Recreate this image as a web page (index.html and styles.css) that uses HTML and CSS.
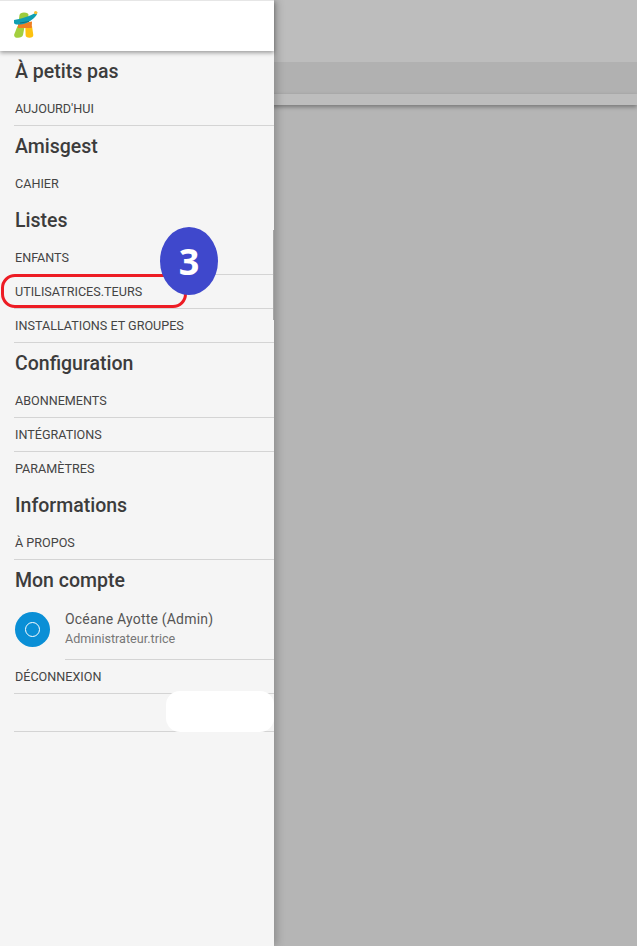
FILE: index.html
```html
<!DOCTYPE html>
<html lang="fr">
<head>
<meta charset="utf-8">
<title>Amisgest</title>
<link rel="stylesheet" href="styles.css">
</head>
<body>
<div class="app">
  <main class="backdrop">
    <div class="bar-top"></div>
    <div class="bar-band"></div>
    <div class="bar-low"></div>
  </main>
  <aside class="drawer">
    <header class="drawer-head">
      <svg class="logo" width="26" height="29" viewBox="13 10 26 29">
        <path d="M18.5 23 L19.5 15 Q20 12.5 24 12.5 Q28.5 12.5 28.5 15 L27.5 22Z" fill="#9ccb3b"/>
        <path d="M17.5 26 L24.7 26 L23 35 Q22 37.7 18 37.7 Q13.7 37.7 14.2 34.5Z" fill="#a3cf3e"/>
        <path d="M25.3 26 L32 26 L33.3 35 Q33.3 37.7 29.5 37.7 Q25.6 37.7 25.6 35Z" fill="#fdc20f"/>
        <path d="M18 24 L32 21.5 L31.7 28 L18 28Z" fill="#ee7f22"/>
        <path d="M14 20 C20 19 30 16.5 37 12 C37.5 13 37 15 35 17 C31 21 26 24 20 24.5 C17 24.7 14.5 24.5 14 23Z" fill="#0f9fb2"/>
        <path d="M20 23 L29 21.5" stroke="#0b6f80" stroke-width="1"/>
        <circle cx="35.7" cy="12.6" r="1.7" fill="#fbc02d"/>
      </svg>
    </header>
    <nav class="menu">
      <h2 class="section first">À petits pas</h2>
      <a class="item">AUJOURD'HUI</a>
      <h2 class="section">Amisgest</h2>
      <a class="item plain">CAHIER</a>
      <h2 class="section">Listes</h2>
      <a class="item">ENFANTS</a>
      <a class="item">UTILISATRICES.TEURS</a>
      <a class="item">INSTALLATIONS ET GROUPES</a>
      <h2 class="section">Configuration</h2>
      <a class="item">ABONNEMENTS</a>
      <a class="item">INTÉGRATIONS</a>
      <a class="item plain">PARAMÈTRES</a>
      <h2 class="section">Informations</h2>
      <a class="item">À PROPOS</a>
      <h2 class="section">Mon compte</h2>
      <div class="profile">
        <div class="avatar"><span class="avatar-ring"></span></div>
        <div class="who">
          <div class="who-name">Océane Ayotte (Admin)</div>
          <div class="who-role">Administrateur.trice</div>
        </div>
      </div>
      <a class="item">DÉCONNEXION</a>
      <div class="item empty"></div>
    </nav>
  </aside>
  <div class="sliver"></div>
  <div class="mask"></div>
  <div class="highlight"></div>
  <div class="badge">3</div>
</div>
</body>
</html>
```
FILE: styles.css
```css
* { box-sizing: border-box; }
html, body { margin: 0; height: 100%; }
body { font-family: Roboto, "Liberation Sans", sans-serif; background: #b5b5b5; overflow: hidden; }
.app { position: relative; width: 637px; height: 946px; overflow: hidden; display: flex; }
.backdrop { position: absolute; inset: 0; background: #b5b5b5; }
.bar-top { height: 62px; background: #bdbdbd; }
.bar-band { height: 32px; background: #b1b1b1; }
.bar-low { height: 11px; background: #bdbdbd; box-shadow: 0 2px 4px rgba(0,0,0,.35); }
.drawer { position: relative; width: 274px; height: 946px; background: #f5f5f5; box-shadow: 3px 0 8px rgba(0,0,0,.22); }
.drawer-head { height: 51px; background: #fff; border-top: 1px solid #e6e6e6; box-shadow: 0 2px 4px rgba(0,0,0,.35); padding: 9px 0 0 13px; position: relative; }
.logo { display: block; filter: blur(.3px); }
.menu { display: flex; flex-direction: column; padding: 1px 0 0 14px; }
.section { margin: 0; height: 40.5px; padding: 7.5px 0 0 1px; font-size: 19.5px; line-height: 26px; font-weight: 500; color: #3c3c3c; }
.section.first { height: 40px; padding-top: 6.5px; }
.item { display: block; height: 34px; padding: 0 0 0 1px; border-bottom: 1px solid #d4d4d4; font-size: 12.6px; line-height: 34px; color: #444; }
.item.plain { border-bottom-color: transparent; }
.item.empty { height: 38px; }
.profile { position: relative; height: 59.5px; display: flex; gap: 15px; padding: 11px 0 0 1px; }
.profile::after { content: ""; position: absolute; left: 51px; right: 0; bottom: 0; border-bottom: 1px solid #d4d4d4; }
.avatar { width: 35px; height: 35px; border-radius: 50%; background: #0a8fd6; display: flex; align-items: center; justify-content: center; flex: none; }
.avatar-ring { width: 15px; height: 15px; border: 1px solid #fff; border-radius: 50%; }
.who { margin-top: -2px; }
.who-name { font-size: 14px; line-height: 18px; color: #555; letter-spacing: .2px; }
.who-role { font-size: 12.6px; line-height: 18px; color: #777; margin-top: 2px; }
.sliver { position: absolute; left: 273px; top: 230px; width: 1px; height: 90px; background: #a6a6a6; }
.mask { position: absolute; left: 166px; top: 691px; width: 108px; height: 41px; background: #fff; border-radius: 14px; }
.highlight { position: absolute; left: 1px; top: 274px; width: 186px; height: 34px; border: 3px solid #ed1c24; border-radius: 14px; }
.badge { position: absolute; left: 160px; top: 227px; width: 58px; height: 68px; border-radius: 50%; background: #3f48cc; color: #fff; font-family: "Open Sans", sans-serif; font-weight: 700; font-size: 36px; line-height: 70px; text-align: center; }
```
